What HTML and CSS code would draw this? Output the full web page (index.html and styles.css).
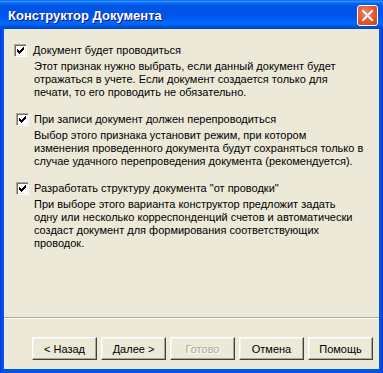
FILE: index.html
```html
<!DOCTYPE html>
<html lang="ru">
<head>
    <meta charset="UTF-8">
    <title>Конструктор Документа</title>
    <link rel="stylesheet" href="styles.css">
</head>
<body>
    <div class="window">
        <div class="titlebar">
            <span class="title">Конструктор Документа</span>
            <button class="close" aria-label="Закрыть">
                <svg width="13" height="13" viewBox="0 0 13 13">
                    <path d="M2 2 L11 11 M11 2 L2 11" stroke="#fff" stroke-width="2" stroke-linecap="square" fill="none"/>
                </svg>
            </button>
        </div>

        <div class="client">
            <div class="options">
                <div class="option opt-post">
                    <div class="option-head">
                        <span class="checkbox checked"></span>
                        <span class="label">Документ будет проводиться</span>
                    </div>
                    <div class="desc">
                        Этот признак нужно выбрать, если данный документ будет<br>
                        отражаться в учете. Если документ создается только для<br>
                        печати, то его проводить не обязательно.
                    </div>
                </div>

                <div class="option">
                    <div class="option-head">
                        <span class="checkbox checked"></span>
                        <span class="label">При записи документ должен перепроводиться</span>
                    </div>
                    <div class="desc">
                        Выбор этого признака установит режим, при котором<br>
                        изменения проведенного документа будут сохраняться только в<br>
                        случае удачного перепроведения документа (рекомендуется).
                    </div>
                </div>

                <div class="option">
                    <div class="option-head">
                        <span class="checkbox checked"></span>
                        <span class="label">Разработать структуру документа "от проводки"</span>
                    </div>
                    <div class="desc">
                        При выборе этого варианта конструктор предложит задать<br>
                        одну или несколько корреспонденций счетов и автоматически<br>
                        создаст документ для формирования соответствующих<br>
                        проводок.
                    </div>
                </div>
            </div>

            <div class="separator"></div>

            <div class="buttons">
                <button class="btn">&lt; Назад</button>
                <button class="btn">Далее &gt;</button>
                <button class="btn" disabled>Готово</button>
                <button class="btn">Отмена</button>
                <button class="btn">Помощь</button>
            </div>
        </div>
    </div>
</body>
</html>
```

FILE: styles.css
```css
* {
    margin: 0;
    padding: 0;
    box-sizing: border-box;
}

body {
    background: #fff;
    font-family: 'Liberation Sans', Arial, sans-serif;
    font-size: 11px;
    color: #000;
}

.window {
    width: 383px;
    height: 373px;
    display: flex;
    flex-direction: column;
    background: linear-gradient(to right, #0831D9 0px, #0055EA 2px, #0055EA 381px, #0831D9 383px);
}

/* Заголовок окна */
.titlebar {
    height: 29px;
    display: flex;
    align-items: center;
    justify-content: space-between;
    padding: 0 5px 0 8px;
    background: linear-gradient(to bottom,
        #0058EE 0%, #3A93FF 4%, #288EFF 6%, #127DFF 8%, #036FFC 10%,
        #0262EE 14%, #0057E5 20%, #0054E3 24%, #0055EB 56%, #005BF5 66%,
        #026AFE 76%, #0062EF 86%, #0052D6 92%, #0046C8 100%);
}

.title {
    color: #fff;
    font-weight: 700;
    font-size: 13px;
    text-shadow: 1px 1px #0F1089;
    padding-top: 1px;
}

.close {
    width: 21px;
    height: 21px;
    border: 1px solid #fff;
    border-radius: 3px;
    background: radial-gradient(circle at 40% 35%, #EC8668 0%, #E05630 55%, #C9401C 100%);
    display: flex;
    align-items: center;
    justify-content: center;
    margin-top: 2px;
}

/* Рабочая область */
.client {
    flex: 1;
    margin: 0 4px 4px;
    background: #ECE9D8;
    display: flex;
    flex-direction: column;
}

.options {
    flex: 1;
    padding: 14px 0 0 12px;
}

.option {
    margin-bottom: 13px;
}

.option-head {
    display: flex;
    align-items: center;
    height: 14px;
}

.label {
    margin-left: 5px;
    line-height: 13px;
}

.desc {
    margin: 3px 0 0 18px;
    line-height: 13px;
    white-space: nowrap;
}

/* первый флажок в форме стоит чуть левее */
.opt-post .option-head {
    margin-left: -2px;
}

.opt-post .label {
    margin-left: 6px;
}

.checkbox {
    width: 13px;
    height: 13px;
    flex: none;
    background: #fff;
    border: 1px solid;
    border-color: #ACA899 #fff #fff #ACA899;
    box-shadow: inset 1px 1px #716F64, inset -1px -1px #F1EFE2;
    position: relative;
}

.checkbox.checked::after {
    content: "";
    position: absolute;
    left: 2px;
    top: 2px;
    width: 7px;
    height: 7px;
    background: url("data:image/svg+xml,%3Csvg xmlns='http://www.w3.org/2000/svg' width='7' height='7' shape-rendering='crispEdges'%3E%3Cpath d='M0 2h1v3H0zM1 3h1v3H1zM2 4h1v3H2zM3 3h1v3H3zM4 2h1v3H4zM5 1h1v3H5zM6 0h1v3H6z' fill='%23000'/%3E%3C/svg%3E") no-repeat;
}

.separator {
    height: 2px;
    border-top: 1px solid #ACA899;
    border-bottom: 1px solid #fff;
}

.buttons {
    display: flex;
    justify-content: flex-end;
    gap: 4px;
    padding: 18px 6px 9px;
}

.btn {
    width: 65px;
    height: 23px;
    font-family: 'Liberation Sans', Arial, sans-serif;
    font-size: 11px;
    color: #000;
    background: #ECE9D8;
    border: 1px solid;
    border-color: #fff #404040 #404040 #fff;
    box-shadow: inset -1px -1px #ACA899, inset 1px 1px #F5F4EC;
}

.btn:disabled {
    color: #ACA899;
    text-shadow: 1px 1px #fff;
}
```
